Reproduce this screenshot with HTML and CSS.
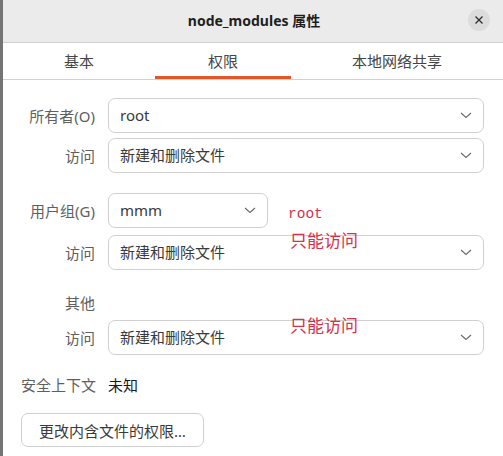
FILE: index.html
```html
<!DOCTYPE html>
<html lang="zh-CN">
<head>
<meta charset="utf-8">
<title>node_modules 属性</title>
<link rel="stylesheet" href="styles.css">
</head>
<body>
<div class="window">
  <header class="header">
    <span class="spacer"></span>
    <h1 class="title">node_modules 属性</h1>
    <div class="close-wrap">
      <button class="close" aria-label="关闭">
        <svg width="10" height="10" viewBox="0 0 10 10"><path d="M1.5 1.5 L8.5 8.5 M8.5 1.5 L1.5 8.5" stroke="#2e2e2e" stroke-width="1.3" fill="none"/></svg>
      </button>
    </div>
  </header>
  <nav class="tabs">
    <div class="tab tab-basic">基本</div>
    <div class="tab tab-perm active">权限</div>
    <div class="tab tab-share">本地网络共享</div>
  </nav>
  <main class="content">
    <div class="row">
      <span class="label">所有者(O)</span>
      <div class="combo"><span class="value">root</span><svg class="chev" width="12" height="7" viewBox="0 0 12 7"><path d="M1 1 L6 5.5 L11 1" stroke="#6a6a6a" stroke-width="1.1" fill="none"/></svg></div>
    </div>
    <div class="row tight">
      <span class="label">访问</span>
      <div class="combo"><span class="value">新建和删除文件</span><svg class="chev" width="12" height="7" viewBox="0 0 12 7"><path d="M1 1 L6 5.5 L11 1" stroke="#6a6a6a" stroke-width="1.1" fill="none"/></svg></div>
    </div>
    <div class="row group">
      <span class="label">用户组(G)</span>
      <div class="combo short"><span class="value">mmm</span><svg class="chev" width="12" height="7" viewBox="0 0 12 7"><path d="M1 1 L6 5.5 L11 1" stroke="#6a6a6a" stroke-width="1.1" fill="none"/></svg></div>
    </div>
    <div class="row loose">
      <span class="label">访问</span>
      <div class="combo"><span class="value">新建和删除文件</span><svg class="chev" width="12" height="7" viewBox="0 0 12 7"><path d="M1 1 L6 5.5 L11 1" stroke="#6a6a6a" stroke-width="1.1" fill="none"/></svg></div>
    </div>
    <div class="row other">
      <span class="label">其他</span>
    </div>
    <div class="row loose">
      <span class="label">访问</span>
      <div class="combo"><span class="value">新建和删除文件</span><svg class="chev" width="12" height="7" viewBox="0 0 12 7"><path d="M1 1 L6 5.5 L11 1" stroke="#6a6a6a" stroke-width="1.1" fill="none"/></svg></div>
    </div>
    <div class="row context">
      <span class="label">安全上下文</span>
      <span class="ctx-value">未知</span>
    </div>
    <div class="actions">
      <button class="btn">更改内含文件的权限…</button>
    </div>
  </main>
  <span class="note note-root">root</span>
  <span class="note note-cn note-1">只能访问</span>
  <span class="note note-cn note-2">只能访问</span>
</div>
</body>
</html>
```

FILE: styles.css
```css
* { box-sizing: border-box; }
html, body {
  margin: 0;
  padding: 0;
  width: 503px;
  height: 456px;
  overflow: hidden;
  background: #ffffff;
}
body {
  font-family: "Noto Sans", "Noto Sans CJK SC", sans-serif;
  font-size: 15px;
  color: #3a3a3a;
}
.window {
  position: relative;
  width: 503px;
  height: 456px;
  border-left: 3px solid #747474;
  background: #ffffff;
}
.header {
  height: 43px;
  background: #ebebeb;
  border-bottom: 1px solid #cfcfcf;
  display: grid;
  grid-template-columns: 1fr auto 1fr;
  align-items: center;
}
.title {
  margin: 0;
  font-size: 14px;
  font-weight: 700;
  color: #1e1e1e;
  line-height: 1;
  padding-left: 2px;
}
.close-wrap {
  display: flex;
  justify-content: flex-end;
  padding-right: 13px;
  padding-bottom: 3px;
}
.close {
  width: 22px;
  height: 22px;
  border-radius: 50%;
  border: none;
  background: #dcdcdc;
  padding: 0;
  display: flex;
  align-items: center;
  justify-content: center;
}
.tabs {
  display: flex;
  height: 37px;
  border-bottom: 1px solid #d2d2d2;
}
.tab {
  display: flex;
  align-items: center;
  justify-content: center;
  color: #454545;
  font-size: 15px;
  padding-bottom: 1px;
}
.tab-basic { width: 152px; }
.tab-perm { width: 136px; }
.tab-share { width: 212px; }
.tab.active {
  box-shadow: inset 0 -3px 0 #e2572a;
}
.content {
  display: flex;
  flex-direction: column;
  padding: 18px 19px 0 18px;
}
.row {
  display: grid;
  grid-template-columns: 74px 1fr;
  column-gap: 13px;
  align-items: center;
}
.row.tight { margin-top: 5px; }
.row.loose { margin-top: 7px; }
.row.group { margin-top: 20px; }
.row.other { margin-top: 21px; height: 22px; }
.row.context { margin-top: 18px; height: 22px; }
.label {
  text-align: right;
  color: #5f5f5f;
  white-space: nowrap;
}
.row.context .label { text-align: left; }
.ctx-value { color: #1a1a1a; }
.combo {
  height: 35px;
  border: 1px solid #d0d0d0;
  border-radius: 7px;
  display: flex;
  align-items: center;
  justify-content: space-between;
  padding: 0 11px 0 11px;
  background: #ffffff;
  color: #3a3a3a;
}
.combo.short { width: 160px; }
.value { line-height: 1; }
.chev { display: block; }
.actions {
  margin-top: 18px;
  display: flex;
}
.btn {
  height: 34px;
  padding: 0 17px;
  border: 1px solid #d0d0d0;
  border-radius: 7px;
  background: #ffffff;
  font-family: "Noto Sans", "Noto Sans CJK SC", sans-serif;
  font-size: 15px;
  color: #3a3a3a;
}
.note {
  position: absolute;
  color: #d8314c;
  line-height: 1;
  white-space: nowrap;
}
.note-root {
  left: 285px;
  top: 207px;
  font-family: "Liberation Mono", monospace;
  font-size: 14.5px;
}
.note-cn {
  left: 287px;
  font-family: "Noto Sans CJK SC", serif;
  font-size: 17px;
}
.note-1 { top: 231px; }
.note-2 { top: 316px; }
```
